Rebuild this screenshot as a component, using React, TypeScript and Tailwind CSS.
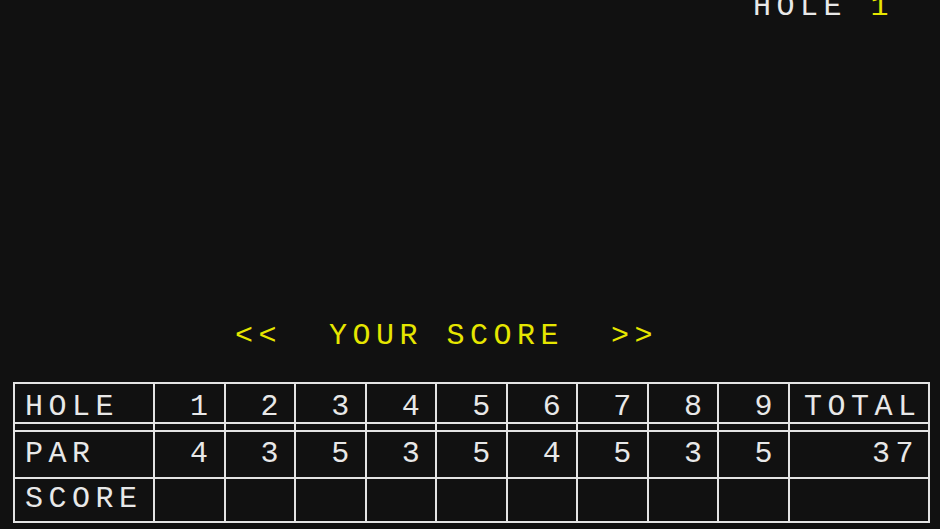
import React from "react";

const holes = [1, 2, 3, 4, 5, 6, 7, 8, 9];
const pars = [4, 3, 5, 3, 5, 4, 5, 3, 5];

const cols = "grid grid-cols-[138px_repeat(9,minmax(0,1fr))_140px]";

const ScoreCard = () => {
  const total = pars.reduce((a, b) => a + b, 0);
  return (
    <div className="ml-[13px] w-[917px] border-2 border-[#e4e4e4]">
      {/* hole numbers */}
      <div className={`${cols} h-[38px]`}>
        <div className="pl-[10px] pt-[8px]">HOLE</div>
        {holes.map((h) => (
          <div key={h} className="border-l-2 border-[#e4e4e4] pt-[8px] pr-[10px] text-right">
            {h}
          </div>
        ))}
        <div className="border-l-2 border-[#e4e4e4] pl-[14px] pt-[8px]">TOTAL</div>
      </div>

      {/* double rule under the header */}
      <div className={`${cols} h-[10px] border-y-2 border-[#e4e4e4]`}>
        <div />
        {holes.map((h) => (
          <div key={h} className="border-l-2 border-[#e4e4e4]" />
        ))}
        <div className="border-l-2 border-[#e4e4e4]" />
      </div>

      {/* par per hole */}
      <div className={`${cols} h-[45px]`}>
        <div className="pl-[10px] pt-[7px]">PAR</div>
        {pars.map((p, i) => (
          <div key={i} className="border-l-2 border-[#e4e4e4] pt-[7px] pr-[10px] text-right">
            {p}
          </div>
        ))}
        <div className="border-l-2 border-[#e4e4e4] pt-[7px] pr-[9px] text-right">{total}</div>
      </div>

      {/* empty score row */}
      <div className={`${cols} h-[44px] border-t-2 border-[#e4e4e4]`}>
        <div className="pl-[10px] pt-[5px]">SCORE</div>
        {holes.map((h) => (
          <div key={h} className="border-l-2 border-[#e4e4e4]" />
        ))}
        <div className="border-l-2 border-[#e4e4e4]" />
      </div>
    </div>
  );
};

export default function App() {
  return (
    <div className="w-[940px] h-[529px] overflow-hidden bg-[#111111] font-['Liberation_Mono','DejaVu_Sans_Mono',monospace] text-[30px] leading-[30px] tracking-[5.5px] text-[#e8e8e8]">
      <div className="-mt-[8px] flex justify-end pr-[46px] whitespace-pre">
        HOLE <span className="text-[#e6e600]">1</span>
      </div>

      <div className="mt-[299px] pl-[235px] whitespace-pre text-[#e6e600]">
        {"<<  YOUR SCORE  >>"}
      </div>

      <div className="mt-[31px]">
        <ScoreCard />
      </div>
    </div>
  );
}
